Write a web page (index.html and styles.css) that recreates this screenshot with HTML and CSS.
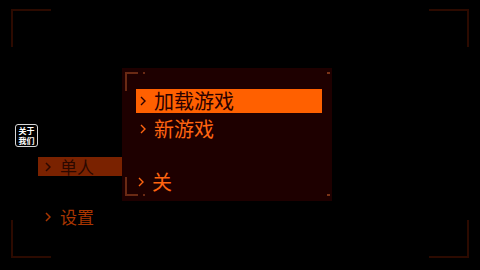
FILE: index.html
```html
<!DOCTYPE html>
<html>
<head>
<meta charset="utf-8">
<link rel="stylesheet" href="styles.css">
</head>
<body>
<div class="screen">
  <div class="frame tl"></div><div class="frame tr"></div>
  <div class="frame bl"></div><div class="frame br"></div>

  <div class="side">
    <div class="about"><span>关于</span><span>我们</span></div>
    <div class="side-item active">
      <svg class="chev" viewBox="0 0 6 10"><polyline points="1,1 5,5 1,9"/></svg>
      <span>单人</span>
    </div>
    <div class="side-item settings">
      <svg class="chev" viewBox="0 0 6 10"><polyline points="1,1 5,5 1,9"/></svg>
      <span>设置</span>
    </div>
  </div>

  <div class="panel">
    <div class="bracket ptl"></div>
    <div class="bracket pbl"></div>
    <div class="dot ptr"></div>
    <div class="dot pbr"></div>
    <div class="item selected">
      <svg class="chev" viewBox="0 0 6 10"><polyline points="1,1 5,5 1,9"/></svg>
      <span>加载游戏</span>
    </div>
    <div class="item">
      <svg class="chev" viewBox="0 0 6 10"><polyline points="1,1 5,5 1,9"/></svg>
      <span>新游戏</span>
    </div>
    <div class="item last">
      <svg class="chev" viewBox="0 0 6 10"><polyline points="1,1 5,5 1,9"/></svg>
      <span>关</span>
    </div>
  </div>
</div>
</body>
</html>
```

FILE: styles.css
```css
html, body {
  margin: 0;
  padding: 0;
  background: #000;
}
body {
  width: 480px;
  height: 270px;
  overflow: hidden;
  font-family: "Noto Sans CJK SC", "Noto Sans", sans-serif;
}
.screen {
  position: relative;
  width: 480px;
  height: 270px;
  display: flex;
  align-items: flex-start;
}
.frame {
  position: absolute;
  width: 38px;
  height: 36px;
  border-color: #2c0a00;
  border-style: solid;
  border-width: 0;
}
.frame.tl { left: 11px; top: 9px; border-left-width: 2px; border-top-width: 2px; }
.frame.tr { right: 11px; top: 9px; border-right-width: 2px; border-top-width: 2px; }
.frame.bl { left: 11px; bottom: 12px; border-left-width: 2px; border-bottom-width: 2px; }
.frame.br { right: 11px; bottom: 12px; border-right-width: 2px; border-bottom-width: 2px; }

.side {
  width: 122px;
  flex: none;
  display: flex;
  flex-direction: column;
  padding-top: 124px;
}
.about {
  margin-left: 15px;
  width: 23px;
  height: 23px;
  border: 1.5px solid #d8d8d8;
  border-radius: 3px;
  box-sizing: border-box;
  display: flex;
  flex-direction: column;
  align-items: center;
  justify-content: center;
  color: #fff;
  font-size: 8px;
  line-height: 10px;
  font-weight: 700;
}
.about span { display: block; white-space: nowrap; height: 10px; }
.side-item {
  display: flex;
  align-items: center;
  height: 19px;
  padding-left: 7px;
  font-size: 17px;
  line-height: 19px;
  color: #a83600;
}
.side-item .chev {
  width: 6px;
  height: 10px;
  margin-right: 9px;
  fill: none;
  stroke: currentColor;
  stroke-width: 1.5;
}
.side-item.active {
  margin-top: 10px;
  margin-left: 38px;
  background: #7a2200;
  color: #2a0800;
}
.side-item.settings {
  margin-top: 31px;
  margin-left: 38px;
}

.panel {
  position: relative;
  margin-top: 68px;
  width: 210px;
  height: 133px;
  background: #1e0000;
  box-sizing: border-box;
  padding: 21px 10px 0 14px;
  display: flex;
  flex-direction: column;
  gap: 4px;
}
.bracket {
  position: absolute;
  width: 11px;
  height: 17px;
  border: 0 solid #6a2a14;
}
.bracket::after {
  content: "";
  position: absolute;
  width: 2px;
  height: 2px;
  left: 16px;
  background: #6a2a14;
}
.ptl { left: 3px; top: 4px; border-left-width: 2px; border-top-width: 2px; }
.ptl::after { top: -2px; }
.pbl { left: 3px; bottom: 5px; border-left-width: 2px; border-bottom-width: 2px; }
.pbl::after { bottom: -2px; }
.dot {
  position: absolute;
  width: 3px;
  height: 2px;
  background: #7a3418;
}
.ptr { right: 2px; top: 4px; }
.pbr { right: 2px; bottom: 5px; }

.item {
  display: flex;
  align-items: center;
  height: 24px;
  padding-left: 4px;
  font-size: 20px;
  line-height: 24px;
  color: #ff6410;
}
.item .chev {
  width: 6px;
  height: 10px;
  margin-right: 8px;
  fill: none;
  stroke: currentColor;
  stroke-width: 1.4;
}
.item.selected {
  background: #ff6000;
  color: #2a0000;
}
.item.last {
  margin-top: 25px;
  padding-left: 2px;
}
```
